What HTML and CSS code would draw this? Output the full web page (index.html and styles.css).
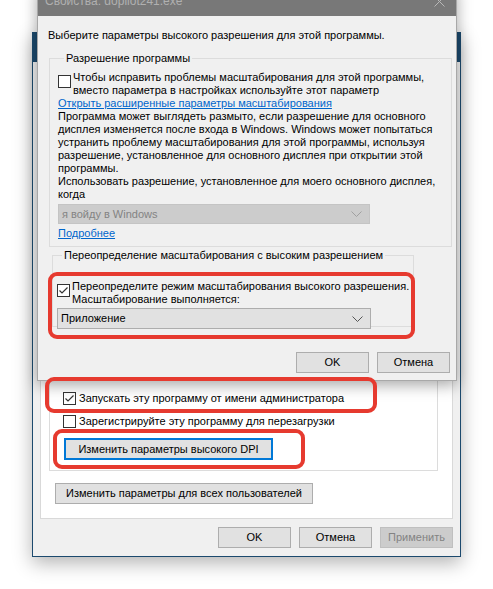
FILE: index.html
```html
<!DOCTYPE html>
<html>

<head>
    <title>Свойства: dopilot241.exe</title>
    <link rel="stylesheet" href="styles.css">
</head>

<body>
    <div class="desktop">

        <!-- back window: properties, compatibility tab -->
        <div class="window back">
            <div class="titlebar back_title"></div>
            <div class="back_body">
                <div class="panel">
                    <div class="options">
                        <div class="check_row">
                            <span class="box">
                                <svg width="11" height="11" viewBox="0 0 11 11"><polyline points="1.5,5.5 4,8 9.5,2.5" fill="none" stroke="#333" stroke-width="1.2"/></svg>
                            </span>
                            <span class="check_text">Запускать эту программу от имени администратора</span>
                        </div>
                        <div class="check_row">
                            <span class="box"></span>
                            <span class="check_text">Зарегистрируйте эту программу для перезагрузки</span>
                        </div>
                        <button class="btn btn_focus">Изменить параметры высокого DPI</button>
                    </div>
                    <button class="btn btn_all">Изменить параметры для всех пользователей</button>
                </div>
                <div class="actions">
                    <button class="btn">OK</button>
                    <button class="btn">Отмена</button>
                    <button class="btn btn_disabled">Применить</button>
                </div>
            </div>
        </div>

        <!-- front window: high DPI settings -->
        <div class="window front">
            <div class="titlebar front_title">
                <span>Свойства: dopilot241.exe</span>
                <svg width="11" height="11" viewBox="0 0 11 11"><path d="M0.5 0.5 L10.5 10.5 M10.5 0.5 L0.5 10.5" stroke="#b8b8b8" stroke-width="1"/></svg>
            </div>
            <div class="front_body">
                <p class="intro">Выберите параметры высокого разрешения для этой программы.</p>

                <fieldset class="group group_app">
                    <legend>Разрешение программы</legend>
                    <div class="check_row">
                        <span class="box"></span>
                        <span class="check_text">Чтобы исправить проблемы масштабирования для этой программы,<br>вместо параметра в настройках используйте этот параметр</span>
                    </div>
                    <a class="link" href="#">Открыть расширенные параметры масштабирования</a>
                    <p>Программа может выглядеть размыто, если разрешение для основного<br>дисплея изменяется после входа в Windows. Windows может попытаться<br>устранить проблему масштабирования для этой программы, используя<br>разрешение, установленное для основного дисплея при открытии этой<br>программы.</p>
                    <p>Использовать разрешение, установленное для моего основного дисплея,<br>когда</p>
                    <div class="select select_disabled">
                        <span>я войду в Windows</span>
                        <svg width="11" height="6" viewBox="0 0 11 6"><polyline points="0.5,0.5 5.5,5.5 10.5,0.5" fill="none" stroke="#a0a0a0" stroke-width="1"/></svg>
                    </div>
                    <a class="link link_more" href="#">Подробнее</a>
                </fieldset>

                <fieldset class="group group_override">
                    <legend>Переопределение масштабирования с высоким разрешением</legend>
                    <div class="check_row">
                        <span class="box">
                            <svg width="11" height="11" viewBox="0 0 11 11"><polyline points="1.5,5.5 4,8 9.5,2.5" fill="none" stroke="#333" stroke-width="1.2"/></svg>
                        </span>
                        <span class="check_text">Переопределите режим масштабирования высокого разрешения.<br>Масштабирование выполняется:</span>
                    </div>
                    <div class="select">
                        <span>Приложение</span>
                        <svg width="11" height="6" viewBox="0 0 11 6"><polyline points="0.5,0.5 5.5,5.5 10.5,0.5" fill="none" stroke="#555" stroke-width="1"/></svg>
                    </div>
                </fieldset>

                <div class="actions front_actions">
                    <button class="btn">OK</button>
                    <button class="btn">Отмена</button>
                </div>
            </div>
        </div>

        <!-- red annotation frames -->
        <div class="mark mark_override"></div>
        <div class="mark mark_admin"></div>
        <div class="mark mark_dpi"></div>
    </div>
</body>

</html>
```

FILE: styles.css
```css
* {
    margin: 0;
    padding: 0;
    box-sizing: border-box;
}

body {
    background: #ffffff;
    font-family: "Liberation Sans", Arial, sans-serif;
    font-size: 11px;
    line-height: 13px;
    color: #000;
    overflow: hidden;
}

.desktop {
    position: relative;
    width: 493px;
    height: 589px;
    overflow: hidden;
}

/* windows */
.window {
    position: absolute;
    background: #f0f0f0;
    display: flex;
    flex-direction: column;
}

.back {
    left: 32px;
    top: 32px;
    width: 429px;
    height: 525px;
    border: 1px solid #1c4a6e;
    box-shadow: 0 6px 18px rgba(0, 0, 0, 0.3);
}

.back_title {
    height: 29px;
    background: #1c4a6e;
}

.back_body {
    flex: 1;
    display: flex;
    flex-direction: column;
    padding: 28px 7px 8px 7px;
}

.panel {
    flex: 1;
    background: #fff;
    border: 1px solid #d9d9d9;
    display: flex;
    flex-direction: column;
    padding: 0 14px 14px 8px;
}

.options {
    flex: 1;
    border: 1px solid #dcdcdc;
    border-top: none;
    display: flex;
    flex-direction: column;
    justify-content: flex-end;
    padding: 0 0 10px 13px;
}

.options .check_row {
    margin-bottom: 10px;
}

.options .check_row .box {
    margin-top: 0;
}

.options .check_text {
    margin-left: 3px;
}

.btn {
    font: inherit;
    line-height: 13px;
    height: 21px;
    width: 73px;
    background: #e1e1e1;
    border: 1px solid #adadad;
    color: #000;
    white-space: nowrap;
}

.btn_focus {
    width: 209px;
    height: 22px;
    margin-left: 1px;
    border: 2px solid #0078d7;
}

.btn_all {
    width: 258px;
    margin: 12px 0 0 6px;
}

.btn_disabled {
    background: #cccccc;
    border-color: #bfbfbf;
    color: #838383;
}

.actions {
    display: flex;
    justify-content: flex-end;
    gap: 8px;
    margin-top: 8px;
}

.front {
    left: 37px;
    top: -14px;
    width: 420px;
    border: 1px solid #a8a8a8;
    box-shadow: 0 4px 14px rgba(0, 0, 0, 0.35);
}

.titlebar {
    flex: none;
}

.front_title {
    height: 29px;
    background: #787878;
    color: #b0b0b0;
    font-size: 12px;
    line-height: 27px;
    padding: 0 11px 0 7px;
    display: flex;
    justify-content: space-between;
    align-items: center;
}

.front_body {
    padding: 13px 4px 7px 10px;
}

.intro {
    margin-bottom: 10px;
}

.group {
    border: 1px solid #dcdcdc;
    min-inline-size: 0;
}

.group legend {
    padding: 0 2px;
    margin-left: 6px;
}

.group_app {
    margin-left: 1px;
    padding: 6px 8px 6px 8px;
}

.group_override {
    width: 362px;
    margin: 2px 0 0 4px;
    padding: 18px 4px 0 4px;
}

.group_override legend {
    margin-left: 5px;
    white-space: nowrap;
}

.check_row {
    display: flex;
    align-items: flex-start;
}

.box {
    flex: none;
    width: 13px;
    height: 13px;
    margin-top: 4px;
    border: 1px solid #333;
    background: #fff;
    display: flex;
    align-items: center;
    justify-content: center;
}

.check_text {
    margin-left: 2px;
    white-space: nowrap;
}

.link {
    display: block;
    color: #0066cc;
    text-decoration: underline;
    width: max-content;
}

.select {
    height: 21px;
    width: 314px;
    margin-top: 2px;
    background: #e1e1e1;
    border: 1px solid #adadad;
    display: flex;
    align-items: center;
    justify-content: space-between;
    padding: 0 7px 0 3px;
}

.select_disabled {
    height: 20px;
    width: 312px;
    margin-top: 3px;
    background: #cccccc;
    border-color: #c4c4c4;
    color: #838383;
}

.group_override .select {
    margin-bottom: -3px;
}

.link_more {
    margin-top: 3px;
}

.front_actions {
    margin: 25px 2px 0 0;
}

/* annotations */
.mark {
    position: absolute;
    border: 4px solid #e63a2f;
    border-radius: 9px;
}

.mark_override {
    left: 48px;
    top: 272px;
    width: 367px;
    height: 67px;
}

.mark_admin {
    left: 45px;
    top: 377px;
    width: 332px;
    height: 36px;
}

.mark_dpi {
    left: 53px;
    top: 429px;
    width: 252px;
    height: 40px;
}
```
